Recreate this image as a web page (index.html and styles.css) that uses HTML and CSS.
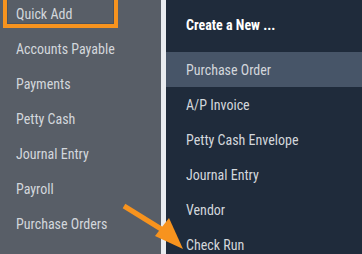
FILE: index.html
```html
<!DOCTYPE html>
<html>
<head>
<meta charset="utf-8">
<link rel="stylesheet" href="styles.css">
</head>
<body>
<div class="app">
  <nav class="side">
    <ul class="side-list">
      <li class="side-item current">Quick Add</li>
      <li class="side-item">Accounts Payable</li>
      <li class="side-item">Payments</li>
      <li class="side-item">Petty Cash</li>
      <li class="side-item">Journal Entry</li>
      <li class="side-item">Payroll</li>
      <li class="side-item">Purchase Orders</li>
    </ul>
    <div class="callout"></div>
  </nav>
  <div class="divider"></div>
  <section class="menu">
    <div class="menu-head">Create a New ...</div>
    <ul class="menu-list">
      <li class="menu-item active">Purchase Order</li>
      <li class="menu-item">A/P Invoice</li>
      <li class="menu-item">Petty Cash Envelope</li>
      <li class="menu-item">Journal Entry</li>
      <li class="menu-item">Vendor</li>
      <li class="menu-item">Check Run</li>
    </ul>
  </section>
  <svg class="arrow" width="362" height="254" viewBox="0 0 362 254">
    <line x1="124" y1="206" x2="166" y2="232" stroke="#f7931e" stroke-width="5" stroke-linecap="butt"/>
    <polygon points="169,218 155,236 183,249" fill="#f7931e"/>
  </svg>
</div>
</body>
</html>
```
FILE: styles.css
```css
* { box-sizing: border-box; }
html, body { margin: 0; padding: 0; }
body {
  width: 362px;
  height: 254px;
  overflow: hidden;
  font-family: Roboto, "Liberation Sans", sans-serif;
  font-size: 14px;
  font-stretch: 87.5%;
  background: #1f2b3b;
}
ul { list-style: none; margin: 0; padding: 0; }
.app {
  position: relative;
  display: flex;
  width: 362px;
  height: 254px;
}
.side {
  position: relative;
  width: 161px;
  flex: none;
  background: #585e67;
}
.side-list { margin-top: -4px; }
.side-item {
  height: 35px;
  display: flex;
  align-items: center;
  padding-left: 16px;
  color: #d3d7dc;
}
.callout {
  position: absolute;
  left: 3px;
  top: -6px;
  width: 115px;
  height: 34px;
  border: 4px solid #f7931e;
  outline: 1px solid #4c525a;
  outline-offset: -5px;
}
.divider {
  width: 5px;
  flex: none;
  background: #e9ecf0;
}
.menu {
  flex: 1;
  background: #1f2b3b;
}
.menu-head {
  height: 52px;
  display: flex;
  align-items: center;
  padding-left: 20px;
  padding-bottom: 2px;
  color: #ffffff;
  font-weight: 700;
}
.menu-item {
  height: 35px;
  display: flex;
  align-items: center;
  padding-left: 20px;
  color: #d3d7dc;
}
.menu-item.active { background: #475568; }
.arrow {
  position: absolute;
  left: 0;
  top: 0;
  pointer-events: none;
}
```
